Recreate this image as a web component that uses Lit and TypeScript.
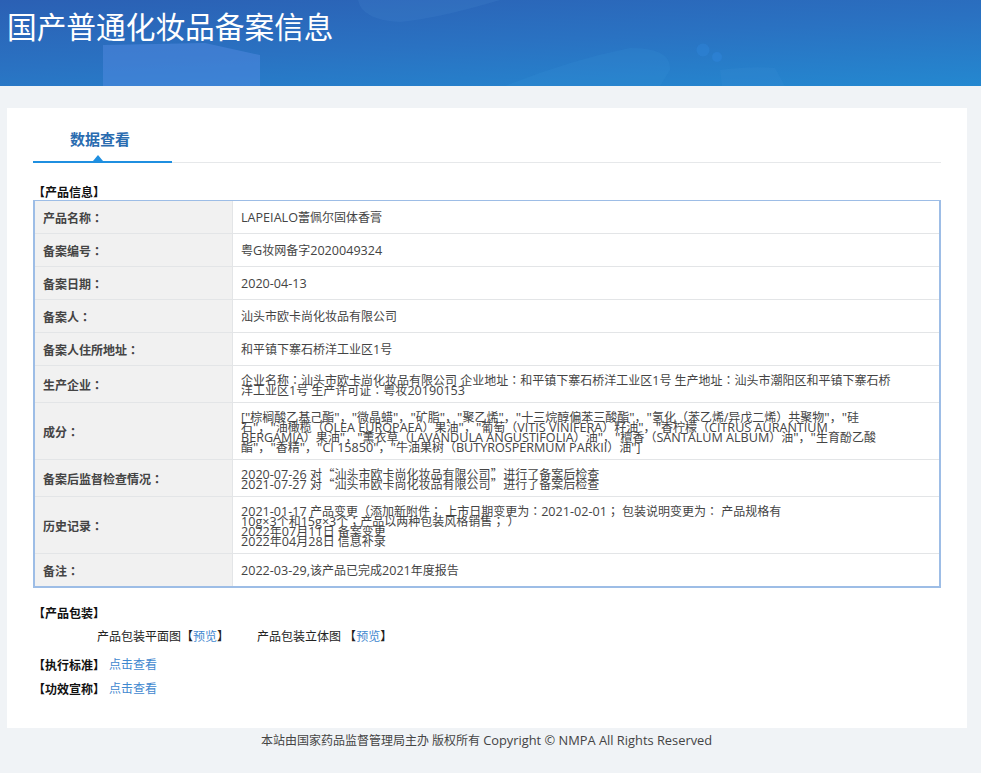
import { LitElement, html, css, svg } from "lit";
import { customElement } from "lit/decorators.js";

const tok = (s: string) =>
  s.split(/([A-Za-z0-9][A-Za-z0-9 .,\-×©]*|[：；]|[“”]|")/).map((p, i) => {
    if (!p) return "";
    if (i % 2 === 0) return p;
    if (p === "：" || p === "；") return html`<span class="tc">${p}</span>`;
    if (p === "“") return html`<span class="cq o">${p}</span>`;
    if (p === "”") return html`<span class="cq c">${p}</span>`;
    if (p === '"') return html`<span class="q">${p}</span>`;
    return html`<span class="lat">${p}</span>`;
  });

const lines = (a: string[]) => a.map((l, i) => html`${i ? html`<br />` : ""}${tok(l)}`);

const rows: [string, string[]][] = [
  ["产品名称：", ["LAPEIALO蕾佩尔固体香膏"]],
  ["备案编号：", ["粤G妆网备字2020049324"]],
  ["备案日期：", ["2020-04-13"]],
  ["备案人：", ["汕头市欧卡尚化妆品有限公司"]],
  ["备案人住所地址：", ["和平镇下寨石桥洋工业区1号"]],
  ["生产企业：", [
    "企业名称：汕头市欧卡尚化妆品有限公司 企业地址：和平镇下寨石桥洋工业区1号 生产地址：汕头市潮阳区和平镇下寨石桥",
    "洋工业区1号 生产许可证：粤妆20190153",
  ]],
  ["成分：", [
    "[\"棕榈酸乙基己酯\"，\"微晶蜡\"，\"矿脂\"，\"聚乙烯\"，\"十三烷醇偏苯三酸酯\"，\"氢化（苯乙烯/异戊二烯）共聚物\"，\"硅",
    "石\"，\"油橄榄（OLEA EUROPAEA）果油\"，\"葡萄（VITIS VINIFERA）籽油\"，\"香柠檬（CITRUS AURANTIUM",
    "BERGAMIA）果油\"，\"薰衣草（LAVANDULA ANGUSTIFOLIA）油\"，\"檀香（SANTALUM ALBUM）油\"，\"生育酚乙酸",
    "酯\"，\"香精\"，\"CI 15850\"，\"牛油果树（BUTYROSPERMUM PARKII）油\"]",
  ]],
  ["备案后监督检查情况：", [
    "2020-07-26 对 “汕头市欧卡尚化妆品有限公司” 进行了备案后检查",
    "2021-07-27 对 “汕头市欧卡尚化妆品有限公司” 进行了备案后检查",
  ]],
  ["历史记录：", [
    "2021-01-17 产品变更（添加新附件； 上市日期变更为：2021-02-01； 包装说明变更为： 产品规格有",
    "10g×3个和15g×3个；产品以两种包装风格销售； ）",
    "2022年07月11日 备案变更",
    "2022年04月28日 信息补录",
  ]],
  ["备注：", ["2022-03-29,该产品已完成2021年度报告"]],
];

@customElement("app-root")
export class AppRoot extends LitElement {
  static styles = css`
    :host {
      display: block;
      min-height: 773px;
      background: #f0f3f6;
      font-family: "Open Sans", "Noto Sans CJK SC", sans-serif;
      font-size: 12px;
      color: #444;
    }
    .lat { font-size: 12.6px; line-height: 0; }
    .tc { font-family: "Noto Sans CJK TC", sans-serif; line-height: 0; }
    .cq { font-family: "Noto Sans CJK SC", sans-serif; line-height: 0; display: inline-block; width: 12px; }
    .cq.o { margin-left: -2.5px; }
    .cq.c { margin-right: -2.5px; }
    .q { font-size: 13.4px; line-height: 0; }
    footer .lat { font-size: 12.85px; }
    header {
      position: relative;
      height: 86px;
      overflow: hidden;
      background: linear-gradient(177deg, #2b60b4 0%, #2a72c2 50%, #2488d0 100%);
    }
    header svg { position: absolute; inset: 0; width: 100%; height: 100%; }
    h1 {
      position: relative;
      margin: 0;
      padding: 5px 0 0 7px;
      font-size: 29.7px;
      line-height: 42px;
      font-weight: 400;
      color: #fff;
      font-family: "Noto Sans CJK SC", sans-serif;
    }
    .card {
      margin: 22px 14px 0 7px;
      height: 620px;
      box-sizing: border-box;
      padding: 0 26px;
      background: #fff;
    }
    .tabs { height: 54px; border-bottom: 1px solid #e6e8ea; position: relative; }
    .tab {
      position: relative;
      box-sizing: border-box;
      width: 139px;
      height: 55px;
      padding: 20px 0 0 37px;
      border-bottom: 2px solid #1f8fe0;
      color: #2a6cb0;
      font-family: "Noto Sans CJK SC", sans-serif;
      font-size: 15px;
      font-weight: 700;
      line-height: 22px;
    }
    .tab::after {
      content: "";
      position: absolute;
      left: 60px;
      bottom: 0;
      border: 5px solid transparent;
      border-top: 0;
      border-bottom: 6px solid #1f8fe0;
    }
    .sec {
      font-family: "Noto Sans CJK SC", sans-serif;
      font-weight: 700;
      color: #111;
      line-height: 14px;
    }
    .sec.first { margin-top: 22px; }
    table {
      border-collapse: separate;
      border-spacing: 0;
      width: 908px;
      margin-top: 1px;
      border-style: solid;
      border-width: 1px 2px 2px 2px;
      border-color: #9dbde6;
      table-layout: fixed;
    }
    td, th {
      border-bottom: 1px solid #e3e5e7;
      line-height: 10px;
      height: 32px;
      box-sizing: border-box;
      padding: 8px;
      text-align: left;
      vertical-align: middle;
    }
    td { padding: 9px 8px 7px; }
    .tall td, .taller td { padding: 10px 8px 6px; }
    tr:last-child td, tr:last-child th { border-bottom: 0; }
    th {
      width: 198px;
      background: #f1f1f1;
      border-right: 1px solid #e3e5e7;
      font-weight: 700;
      font-family: "Noto Sans CJK SC", sans-serif;
      color: #444;
      line-height: 16px;
      padding: 9px 8px 7px;
    }
    .tall td, .tall th { height: 37px; }
    .taller td, .taller th { height: 57px; }
    .pack { margin-top: 18px; }
    .pics { display: flex; margin: 10px 0 0 64px; line-height: 14px; color: #222; }
    .pics .a { width: 160px; }
    .row { display: flex; gap: 4px; margin-top: 10px; line-height: 14px; }
    .pics + .row { margin-top: 14px; }
    a { color: #3f88cf; text-decoration: none; }
    footer { text-align: center; padding: 3px 8px 0 0; line-height: 20px; color: #444; }
  `;

  render() {
    return html`
      <header>
        <svg viewBox="0 0 981 86" aria-hidden="true">
          ${svg`
            <path d="M358 0 H500 Q440 18 400 22 Q362 20 358 0Z" fill="#4a8bd0" opacity=".2"/>
            <path d="M103 45 L205 43 L260 55 V86 H103Z" fill="#5a8fe6" opacity=".42"/>
            <path d="M505 86 Q570 60 630 48 Q672 48 670 70 L660 86Z" fill="#3f9ae0" opacity=".15"/>
            <circle cx="703" cy="50" r="6.5" fill="#2f86dc" opacity=".4"/>
            <circle cx="717" cy="57" r="5" fill="#2f86dc" opacity=".5"/>
            <path d="M720 70 Q750 66 775 68 L785 86 H722Z" fill="#4a9ae0" opacity=".1"/>
          `}
        </svg>
        <h1>国产普通化妆品备案信息</h1>
      </header>
      <main class="card">
        <div class="tabs"><div class="tab">数据查看</div></div>
        <div class="sec first">【产品信息】</div>
        <table>
          ${rows.map(([k, v]) => html`
            <tr class=${v.length === 2 ? "tall" : v.length === 4 ? "taller" : ""}>
              <th>${tok(k)}</th>
              <td>${lines(v)}</td>
            </tr>`)}
        </table>
        <div class="sec pack">【产品包装】</div>
        <div class="pics">
          <div class="a">产品包装平面图【<a href="#">预览</a>】</div>
          <div>产品包装立体图 【<a href="#">预览</a>】</div>
        </div>
        <div class="row"><span class="sec">【执行标准】</span><a href="#">点击查看</a></div>
        <div class="row"><span class="sec">【功效宣称】</span><a href="#">点击查看</a></div>
      </main>
      <footer>本站由国家药品监督管理局主办 版权所有 ${tok("Copyright © NMPA All Rights Reserved")}</footer>
    `;
  }
}
